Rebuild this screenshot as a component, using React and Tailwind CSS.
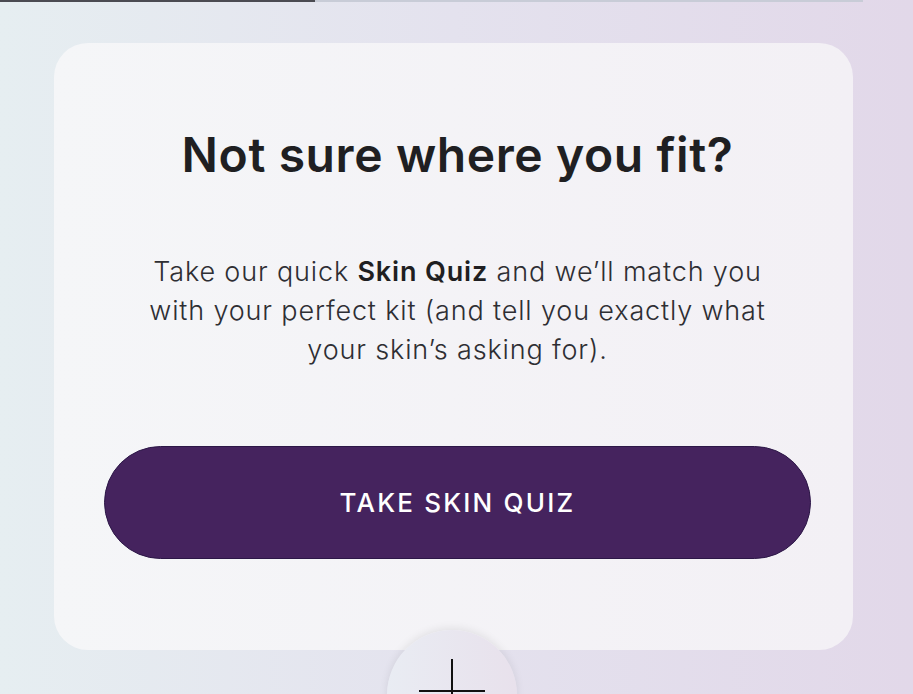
export default function App() {
  return (
    <div
      className="relative h-[694px] w-full overflow-hidden bg-gradient-to-r from-[#e6eef1] via-[#e4e2ee] to-[#e2d8e9]"
      style={{ fontFamily: 'Inter, "Liberation Sans", sans-serif' }}
    >
      {/* progress */}
      <div className="flex h-[2px]">
        <div className="w-[315px] bg-[#4b4b52]" />
        <div className="w-[548px] bg-[#c8ccd7]" />
      </div>

      {/* card */}
      <div className="ml-[54px] mt-[41px] flex h-[607px] w-[799px] flex-col items-center rounded-[34px] bg-gradient-to-r from-[#f5f6f8] to-[#f3f0f5] pl-[50px] pr-[42px] pt-[84px]">
        <h1 className="text-[48px] font-semibold leading-[56px] tracking-[0.6px] text-[#1f1f22]">
          Not sure where you fit?
        </h1>
        <p className="mt-[69px] text-center text-[27px] font-light leading-[39px] tracking-[0.85px] text-[#2e2e33]">
          Take our quick <span className="font-semibold text-[#1f1f22]">Skin Quiz</span> and we’ll match you
          <br />
          with your perfect kit (and tell you exactly what
          <br />
          your skin’s asking for).
        </p>
        <button className="mt-[77px] flex h-[113px] w-full items-center justify-center rounded-full border border-[#2c1747] bg-[#45235e] text-[26px] font-medium tracking-[2.2px] text-white">
          TAKE SKIN QUIZ
        </button>
      </div>

      {/* floating add button */}
      <div className="absolute left-[387px] top-[630px] flex h-[130px] w-[130px] justify-center rounded-full bg-gradient-to-r from-[#e9ecf3] to-[#e8e1ec] shadow-[0_-2px_8px_rgba(0,0,0,0.08)]">
        <svg width="66" height="66" viewBox="0 0 66 66" className="mt-[29px]" fill="none" stroke="#111" strokeWidth="2">
          <line x1="33" y1="0" x2="33" y2="66" />
          <line x1="0" y1="32" x2="66" y2="32" />
        </svg>
      </div>
    </div>
  );
}
